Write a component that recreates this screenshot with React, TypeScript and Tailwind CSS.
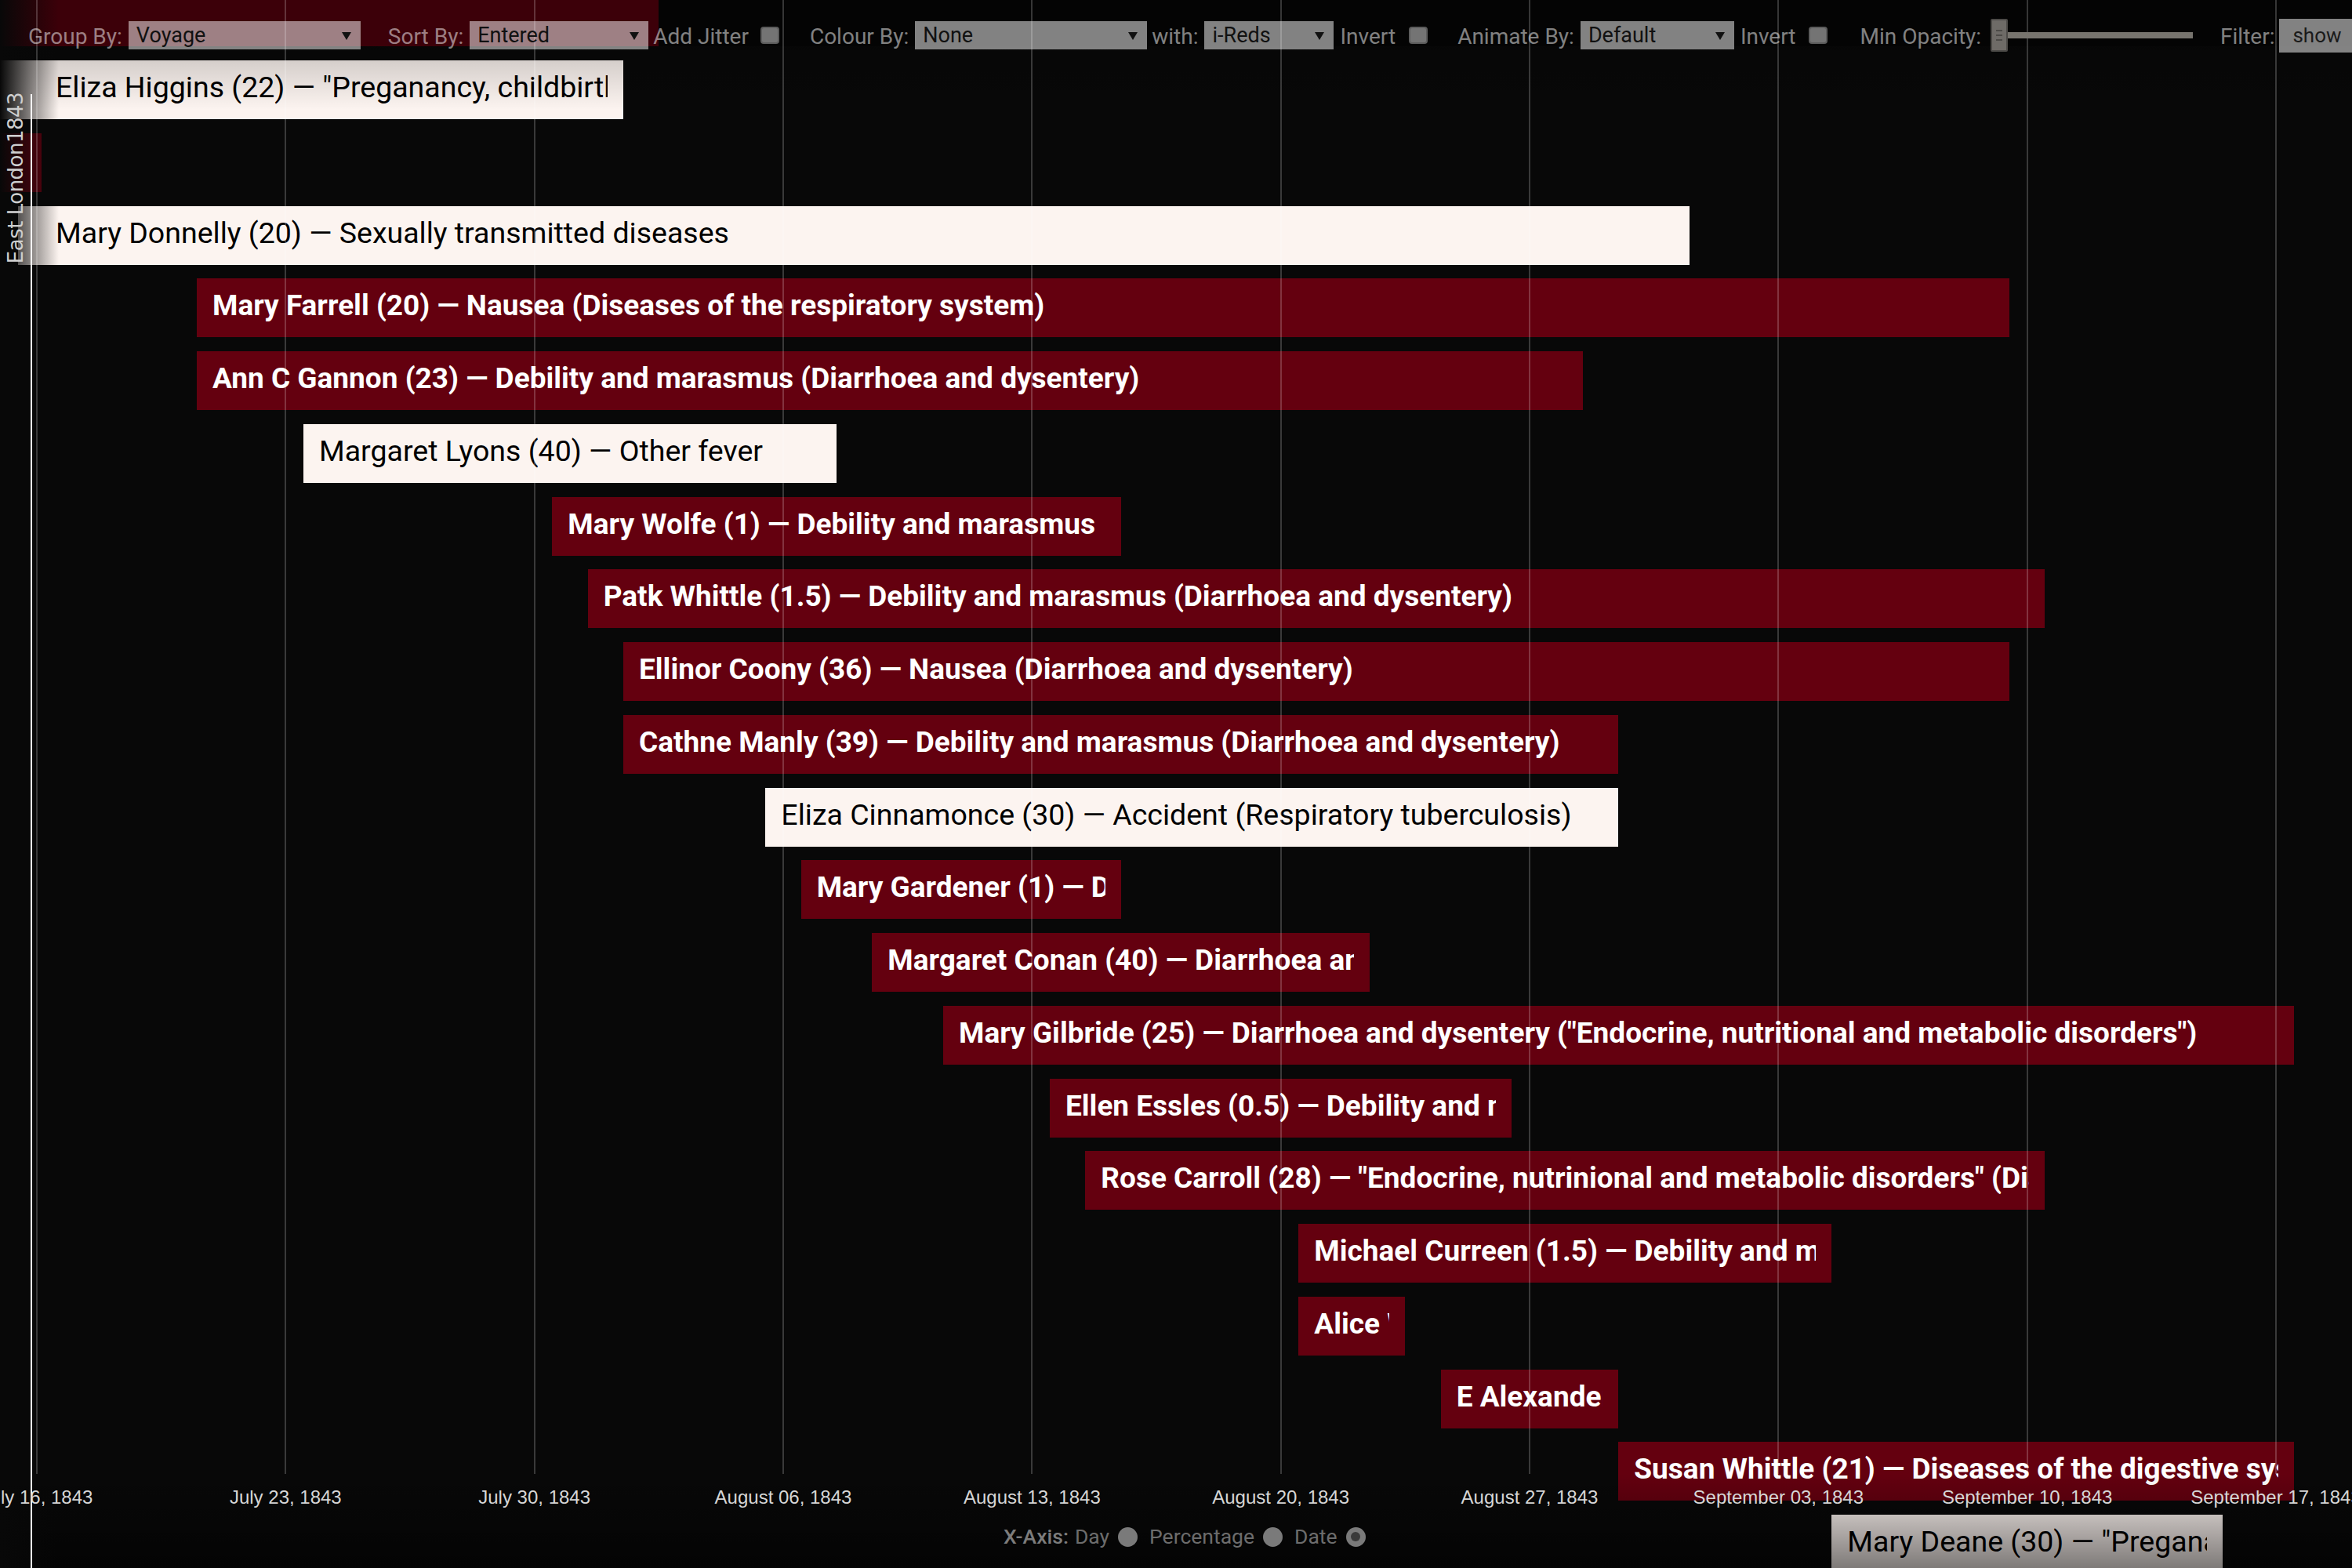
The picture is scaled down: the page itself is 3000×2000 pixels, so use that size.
import React from "react";

// one day on the x axis, in px; bars sit half a day after the tick
const DAY = 317.333 / 7;
const X0 = 47 + DAY / 2;
const dx = (d: number) => X0 + d * DAY;

type Bar = {
  l: number;
  r: number;
  light?: boolean;
  label?: string;
  pad?: string;
};

const bars: Bar[] = [
  { l: 0, r: dx(17) },
  {
    l: 0,
    r: dx(16),
    light: true,
    pad: "pl-[71px]",
    label: 'Eliza Higgins (22) — "Preganancy, childbirth, and the puerperium"',
  },
  { l: 0, r: 53 },
  {
    l: 23,
    r: dx(46),
    light: true,
    pad: "pl-[48px]",
    label: "Mary Donnelly (20) — Sexually transmitted diseases",
  },
  { l: dx(4), r: dx(55), label: "Mary Farrell (20) — Nausea (Diseases of the respiratory system)" },
  { l: dx(4), r: dx(43), label: "Ann C Gannon (23) — Debility and marasmus (Diarrhoea and dysentery)" },
  { l: dx(7), r: dx(22), light: true, label: "Margaret Lyons (40) — Other fever" },
  { l: dx(14), r: dx(30), label: "Mary Wolfe (1) — Debility and marasmus" },
  { l: dx(15), r: dx(56), label: "Patk Whittle (1.5) — Debility and marasmus (Diarrhoea and dysentery)" },
  { l: dx(16), r: dx(55), label: "Ellinor Coony (36) — Nausea (Diarrhoea and dysentery)" },
  { l: dx(16), r: dx(44), label: "Cathne Manly (39) — Debility and marasmus (Diarrhoea and dysentery)" },
  { l: dx(20), r: dx(44), light: true, label: "Eliza Cinnamonce (30) — Accident (Respiratory tuberculosis)" },
  { l: dx(21), r: dx(30), label: "Mary Gardener (1) — Debility and marasmus" },
  { l: dx(23), r: dx(37), label: "Margaret Conan (40) — Diarrhoea and dysentery" },
  {
    l: dx(25),
    r: dx(63),
    label: 'Mary Gilbride (25) — Diarrhoea and dysentery ("Endocrine, nutritional and metabolic disorders")',
  },
  { l: dx(28), r: dx(41), label: "Ellen Essles (0.5) — Debility and marasmus" },
  {
    l: dx(29),
    r: dx(56),
    label: 'Rose Carroll (28) — "Endocrine, nutrinional and metabolic disorders" (Diarrhoea and dysentery)',
  },
  { l: dx(35), r: dx(50), label: "Michael Curreen (1.5) — Debility and marasmus" },
  { l: dx(35), r: dx(38), label: "Alice Whittle (3) — Debility and marasmus" },
  { l: dx(39), r: dx(44), label: "E Alexander (30) — Fever" },
  { l: dx(44), r: dx(63), label: "Susan Whittle (21) — Diseases of the digestive system" },
  {
    l: dx(50),
    r: dx(61),
    light: true,
    label: 'Mary Deane (30) — "Preganancy, childbirth, and the puerperium"',
  },
];

const ticks = [
  "July 16, 1843",
  "July 23, 1843",
  "July 30, 1843",
  "August 06, 1843",
  "August 13, 1843",
  "August 20, 1843",
  "August 27, 1843",
  "September 03, 1843",
  "September 10, 1843",
  "September 17, 1843",
];

const Arrow = () => (
  <svg width="12" height="14" viewBox="0 0 12 14" className="shrink-0">
    <path d="M0 3 L12 3 L6 13 Z" fill="#111" />
  </svg>
);

const Label = ({ ml, children }: { ml?: string; children: React.ReactNode }) => (
  <span className={`${ml ?? ""} mt-[4px]`}>{children}</span>
);

const Select = ({ value, w }: { value: string; w: string }) => (
  <div
    className={`${w} ml-[8px] flex h-[36px] items-center justify-between bg-white/50 pl-[10px] pr-[12px] text-[27px] text-[#111]`}
  >
    <span>{value}</span>
    <Arrow />
  </div>
);

const Check = ({ ml }: { ml: string }) => (
  <div className={`${ml} h-[22px] w-[24px] rounded-[4px] border-2 border-[#5c5c5c] bg-[#747474]`} />
);

const Radio = ({ on }: { on?: boolean }) => (
  <div className="ml-[11px] flex h-[25px] w-[25px] items-center justify-center rounded-full bg-[#7a7a7a]">
    {on && <div className="h-[12px] w-[12px] rounded-full bg-[#3a3a3a]" />}
  </div>
);

const App = () => {
  return (
    <div className="relative h-[2000px] w-[3000px] overflow-hidden bg-[#080808] font-[Roboto,sans-serif]">
      {/* gantt rows */}
      <div className="mt-[-15.75px] flex flex-col gap-[17.75px]">
        {bars.map((b, i) => (
          <div key={i} className="h-[75px]">
            <div
              className={`h-[75px] px-[20px] ${b.pad ?? ""} ${
                b.light
                  ? "bg-[#fcf4f0] text-[37.5px] font-normal text-black"
                  : "bg-[#64000f] text-[37px] font-bold text-white"
              }`}
              style={{ marginLeft: b.l, width: b.r - b.l }}
            >
              <div className="overflow-hidden whitespace-nowrap leading-[69px]">{b.label}</div>
            </div>
          </div>
        ))}
      </div>

      {/* toolbar backdrop + fades */}
      <div className="absolute left-0 top-0 h-[59px] w-full bg-black/40" />
      <div className="absolute left-0 top-[59px] h-[81px] w-full bg-linear-to-b from-black/20 to-transparent" />
      <div className="absolute left-0 top-[1880px] h-[120px] w-full bg-linear-to-b from-transparent to-black/50" />
      <div className="absolute left-0 top-0 h-full w-[75px] bg-linear-to-r from-[#080808] to-transparent" />

      {/* grid */}
      {ticks.map((t, k) => (
        <div
          key={t}
          className="absolute top-0 h-[1880px] w-[2px] bg-white/20"
          style={{ left: 46 + k * 317.333 }}
        />
      ))}

      {/* toolbar */}
      <div className="absolute left-0 top-[27px] flex h-[36px] items-center whitespace-nowrap pl-[36px] text-[28px] text-white/50">
        <Label>Group By:</Label>
        <Select value="Voyage" w="w-[296px]" />
        <Label ml="ml-[35px]">Sort By:</Label>
        <Select value="Entered" w="w-[228px]" />
        <Label ml="ml-[6px]">Add Jitter</Label>
        <Check ml="ml-[15px]" />
        <Label ml="ml-[39px]">Colour By:</Label>
        <Select value="None" w="w-[296px]" />
        <Label ml="ml-[6px]">with:</Label>
        <Select value="i-Reds" w="w-[165px]" />
        <Label ml="ml-[8px]">Invert</Label>
        <Check ml="ml-[17px]" />
        <Label ml="ml-[38px]">Animate By:</Label>
        <Select value="Default" w="w-[196px]" />
        <Label ml="ml-[8px]">Invert</Label>
        <Check ml="ml-[16px]" />
        <Label ml="ml-[42px]">Min Opacity:</Label>
        <div className="ml-[12px] flex items-center">
          <div className="flex h-[42px] w-[22px] flex-col items-center justify-center gap-[4px] rounded-[2px] border-2 border-[#4c4a47] bg-[#6e6b67]">
            <div className="h-[2px] w-[8px] bg-[#4c4a47]" />
            <div className="h-[2px] w-[8px] bg-[#4c4a47]" />
            <div className="h-[2px] w-[8px] bg-[#4c4a47]" />
          </div>
          <div className="h-[8px] w-[236px] bg-[#77746e]" />
        </div>
        <Label ml="ml-[35px]">Filter:</Label>
        <div className="ml-[6px] flex h-[43px] w-[120px] items-center bg-white/50 pl-[17px] text-[26px] text-[#1a1a1a]">
          show
        </div>
      </div>

      {/* group divider + label */}
      <div className="absolute bottom-0 left-[39px] top-[120px] w-[2px] bg-white" />
      <div className="absolute left-[20px] top-[227px] -translate-x-1/2 -translate-y-1/2 -rotate-90 whitespace-nowrap font-['DejaVu_Sans',sans-serif] text-[26px] leading-none tracking-[-0.5px] text-[#cfcfcf]">
        East London1843
      </div>

      {/* x axis labels */}
      {ticks.map((t, k) => (
        <div
          key={t}
          className="absolute top-[1898px] -translate-x-1/2 whitespace-nowrap font-['Liberation_Sans',Arial,sans-serif] text-[24px] leading-[24px] text-[#d6d6d6]"
          style={{ left: 47 + k * 317.333 }}
        >
          {t}
        </div>
      ))}

      {/* x axis mode */}
      <div className="absolute left-[1280px] top-[1945px] flex h-[30px] items-center whitespace-nowrap text-[26.5px] text-[#6c6c6c]">
        <span className="font-medium text-[#7c7c7c]">X-Axis:</span>
        <span className="ml-[8px]">Day</span>
        <Radio />
        <span className="ml-[15px]">Percentage</span>
        <Radio />
        <span className="ml-[15px]">Date</span>
        <Radio on />
      </div>
    </div>
  );
};

export default App;
